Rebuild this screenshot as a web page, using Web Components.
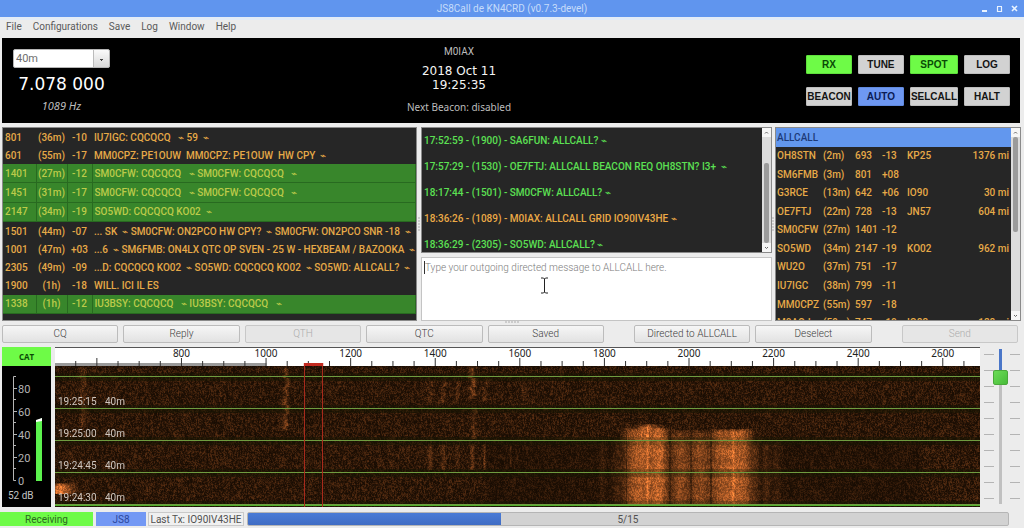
<!DOCTYPE html>
<html lang="en">
<head>
<meta charset="utf-8">
<title>JS8Call de KN4CRD (v0.7.3-devel)</title>
<style>
  html, body { margin: 0; }
  body { background: #ececec; font-family: Roboto, "Liberation Sans", sans-serif; font-size: 10px; color: #5c5c5c; }
</style>
</head>
<body>
<js8-app></js8-app>

<script>
const define = (name, html, setup) => {
  const template = document.createElement('template');
  template.innerHTML = `<style>*{box-sizing:border-box}</style>${html}`;
  customElements.define(name, class extends HTMLElement {
    constructor() {
      super();
      this.attachShadow({ mode: 'open' }).append(template.content.cloneNode(true));
    }
    connectedCallback() { if (setup) setup(this, this.shadowRoot); }
  });
};

define('title-bar', `
<style>
  :host { display: grid; grid-template-columns: 1fr auto 1fr; align-items: center; height: 17px; background: #6095ee; color: #c6dcfa; font-size: 10px; font-weight: 400; }
  h1 { grid-column: 2; margin: 0; font: inherit; }
  div { display: flex; justify-content: flex-end; gap: 4px; padding-right: 4px; }
  button { width: 11px; height: 11px; padding: 0; border: 0; background: none; display: grid; place-items: center; }
  svg { width: 9px; height: 9px; fill: none; stroke: #e9f3ff; stroke-width: 2; }
</style>
<h1><slot></slot></h1>
<div>
  <button aria-label="Minimize"><svg viewBox="0 0 9 9"><path d="M2 7H7"/></svg></button>
  <button aria-label="Maximize"><svg viewBox="0 0 9 9"><path d="M2 2.5H7M2.5 3V7.5H6.5V3" stroke-width="1.2"/></svg></button>
  <button aria-label="Close"><svg viewBox="0 0 9 9"><path d="M2 2L7 7M7 2L2 7" stroke-width="1.6"/></svg></button>
</div>`);

define('menu-bar', `
<style>
  :host { display: block; height: 21px; border-top: 3px solid #e3ecf7; background: #ececec; }
  nav { display: flex; gap: 11px; padding: 0 6px; line-height: 14px; }
  a { color: #5a5a5a; text-decoration: none; font-size: 10px; font-weight: 400; }
</style>
<nav><a href="#file">File</a><a href="#configurations">Configurations</a><a href="#save">Save</a><a href="#log">Log</a><a href="#window">Window</a><a href="#help">Help</a></nav>`);

define('toggle-button', `
<style>
  :host { display: block; }
  button { width: 100%; height: 19px; padding: 0; border: 1px solid #bdbdbd; border-radius: 1px; background: #d2d2d2; color: #141414; font: bold 10px "Liberation Sans", Arial, sans-serif; white-space: nowrap; display: flex; align-items: center; justify-content: center; }
  :host([tone=green]) button { background: #6efb47; border-color: #5fe03c; color: #0a4a06; }
  :host([tone=blue]) button { background: #6e98f2; border-color: #6089de; color: #0b1c55; }
</style>
<button><slot></slot></button>`);

define('radio-header', `
<style>
  :host { display: grid; grid-template-columns: 97px 1fr 204px; height: 85px; margin: 0 4px 0 2px; padding: 11px 10px 0 11px; background: #000; color: #bdbdbd; text-align: center; }
  .dial { display: flex; flex-direction: column; }
  select { appearance: none; width: 97px; height: 19px; padding: 0 2px; border: 1px solid #b5b5b5; border-radius: 2px; color: #6e6e6e; font: 11px Roboto, sans-serif;
    background: linear-gradient(#444, #444) 86px 9px / 3px 1px no-repeat, linear-gradient(#444, #444) 87px 10px / 1px 1px no-repeat, linear-gradient(#bbb, #bbb) 79px 0 / 1px 17px no-repeat, linear-gradient(#fafafa, #d9d9d9) 80px 0 / 16px 17px no-repeat, #fff; }
  .freq { font: 17px/20px "DejaVu Sans", sans-serif; color: #fff; margin: 6px 0 3px; white-space: nowrap; }
  .offset { font: italic 11px/18px "Noto Sans", sans-serif; }
  .call { font-size: 10px; line-height: 14px; margin-top: -5px; }
  .station { padding: 1px 0 0 2px; }
  .clock { font: 12px/14px "DejaVu Sans", sans-serif; color: #f4f4f4; margin: 5px 0 6px; }
  .beacon { font: 10px/18px "Noto Sans", sans-serif; }
  .switches { display: grid; grid-template-columns: repeat(4, 1fr); gap: 13px 6px; padding-top: 6px; align-content: start; }
</style>
<div class="dial">
  <select aria-label="Band"><option>40m</option></select>
  <div class="freq">7.078 000</div>
  <div class="offset">1089 Hz</div>
</div>
<div class="station">
  <div class="call">M0IAX</div>
  <div class="clock">2018 Oct 11<br>19:25:35</div>
  <div class="beacon">Next Beacon: disabled</div>
</div>
<div class="switches">
  <toggle-button tone="green">RX</toggle-button><toggle-button>TUNE</toggle-button><toggle-button tone="green">SPOT</toggle-button><toggle-button>LOG</toggle-button>
  <toggle-button>BEACON</toggle-button><toggle-button tone="blue">AUTO</toggle-button><toggle-button>SELCALL</toggle-button><toggle-button>HALT</toggle-button>
</div>`);

define('scroll-strip', `
<style>
  :host { display: grid; grid-template-rows: 9px var(--before, 1fr) var(--thumb, 1fr) 1fr 9px; width: 9px; background: #dcdcdc; }
  svg { width: 9px; height: 9px; background: #f6f6f6; fill: none; stroke: #666; }
  .thumb { grid-row: 3; margin: 0 2px; border-radius: 2px; background: #9b9b9b; }
  .down { grid-row: 5; }
</style>
<svg viewBox="0 0 9 9"><path d="M3 5.5L4.5 4L6 5.5"/></svg>
<div class="thumb"></div>
<svg class="down" viewBox="0 0 9 9"><path d="M3 4L4.5 5.5L6 4"/></svg>`);

define('band-activity', `
<style>
  :host { display: block; border: 1px solid #8a8a8a; background: #262626; overflow: hidden; }
  table { width: 100%; height: 186px; table-layout: fixed; border-collapse: collapse; color: #e6aa48; font-size: 10px; font-weight: 500; }
  col.a { width: 33px } col.b { width: 31px } col.c { width: 25px }
  td { padding: 1px 0 0 2px; line-height: 14px; white-space: pre; overflow: hidden; }
  td:nth-child(2), td:nth-child(3) { text-align: center; padding: 1px 0 0; }
  tr.cq td { background: #38862b; color: #bccb4a; border-right: 1px solid #286a20; border-bottom: 1px solid #286a20; }
</style>
<table><colgroup><col class="a"><col class="b"><col class="c"><col></colgroup><tbody></tbody></table>`,
(host, root) => {
  const rows = [
    ['801', '(36m)', '-10', 'IU7IGC: CQCQCQ   ⌁ 59  ⌁'],
    ['601', '(55m)', '-17', 'MM0CPZ: PE1OUW  MM0CPZ: PE1OUW  HW CPY  ⌁'],
    ['1401', '(27m)', '-12', 'SM0CFW: CQCQCQ   ⌁ SM0CFW: CQCQCQ   ⌁', 1],
    ['1451', '(31m)', '-17', 'SM0CFW: CQCQCQ   ⌁ SM0CFW: CQCQCQ   ⌁', 1],
    ['2147', '(34m)', '-19', 'SO5WD: CQCQCQ KO02  ⌁', 1],
    ['1501', '(44m)', '-07', '... SK  ⌁ SM0CFW: ON2PCO HW CPY?  ⌁ SM0CFW: ON2PCO SNR -18  ⌁'],
    ['1001', '(47m)', '+03', '...6  ⌁ SM6FMB: ON4LX QTC OP SVEN - 25 W - HEXBEAM / BAZOOKA  ⌁'],
    ['2305', '(49m)', '-09', '...D: CQCQCQ KO02  ⌁ SO5WD: CQCQCQ KO02  ⌁ SO5WD: ALLCALL?  ⌁'],
    ['1900', '(1h)', '-18', 'WILL. ICI IL ES'],
    ['1338', '(1h)', '-12', 'IU3BSY: CQCQCQ   ⌁ IU3BSY: CQCQCQ   ⌁', 1]
  ];
  root.querySelector('tbody').innerHTML = rows.map(([f, a, s, m, cq]) =>
    `<tr${cq ? ' class="cq"' : ''}><td>${f}</td><td>${a}</td><td>${s}</td><td>${m}</td></tr>`).join('');
});

define('message-log', `
<style>
  :host { display: flex; height: 126px; border: 1px solid #8a8a8a; background: #262626; overflow: hidden; --before: 26px; --thumb: 80px; }
  ol { flex: 1; margin: 0; padding: 0 2px; list-style: none; color: #5ce053; font-size: 10px; font-weight: 500; line-height: 26px; white-space: pre; }
  .own { color: #ecaa46; }
</style>
<ol><li>17:52:59 - (1900) - SA6FUN: ALLCALL? ⌁</li><li>17:57:29 - (1530) - OE7FTJ: ALLCALL BEACON REQ OH8STN? I3+  ⌁</li><li>18:17:44 - (1501) - SM0CFW: ALLCALL? ⌁</li><li class="own">18:36:26 - (1089) - M0IAX: ALLCALL GRID IO90IV43HE ⌁</li><li>18:36:29 - (2305) - SO5WD: ALLCALL? ⌁</li></ol>
<scroll-strip></scroll-strip>`);

define('message-editor', `
<style>
  :host { display: flex; position: relative; flex: 1; }
  textarea { flex: 1; min-width: 0; padding: 3px 3px; resize: none; border: 1px solid #c4c4c4; border-radius: 0; outline: 0; background: #fff; color: #444; font: 300 10px/14px Roboto, sans-serif; }
  textarea::placeholder { color: #7d7d7d; opacity: 1; }
  .caret { position: absolute; left: 3px; top: 4px; width: 1px; height: 13px; background: #333; }
  svg { position: absolute; left: 34%; top: 20px; width: 9px; height: 17px; fill: none; stroke: #222; }
</style>
<textarea aria-label="Outgoing message" placeholder="Type your outgoing directed message to ALLCALL here."></textarea>
<span class="caret"></span>
<svg viewBox="0 0 9 17"><path d="M1 1H3.5L4.5 2L5.500 1H8M4.500 2V15M1 16H3.500L4.500 15L5.500 16H8"/></svg>`);

define('call-activity', `
<style>
  :host { display: flex; border: 1px solid #8a8a8a; background: #262626; overflow: hidden; --before: 0px; --thumb: 95px; }
  .view { flex: 1; min-width: 0; height: 192px; overflow: hidden; }
  table { width: 100%; height: 204px; table-layout: fixed; border-collapse: collapse; color: #e6aa48; font-size: 10px; font-weight: 500; }
  col.a { width: 46px } col.b { width: 32px } col.c { width: 27px } col.d { width: 25px } col.e { width: 40px }
  td { padding: 1px 0 0 1px; line-height: 14px; white-space: nowrap; }
  td:nth-child(6) { text-align: right; padding-right: 2px; }
  tr.selected td { background: #6297ee; color: #1d3a78; }
</style>
<div class="view"><table><colgroup><col class="a"><col class="b"><col class="c"><col class="d"><col class="e"><col></colgroup><tbody></tbody></table></div>
<scroll-strip></scroll-strip>`,
(host, root) => {
  const rows = [
    ['OH8STN', '(2m)', '693', '-13', 'KP25', '1376 mi'],
    ['SM6FMB', '(3m)', '801', '+08', '', ''],
    ['G3RCE', '(13m)', '642', '+06', 'IO90', '30 mi'],
    ['OE7FTJ', '(22m)', '728', '-13', 'JN57', '604 mi'],
    ['SM0CFW', '(27m)', '1401', '-12', '', ''],
    ['SO5WD', '(34m)', '2147', '-19', 'KO02', '962 mi'],
    ['WU2O', '(37m)', '751', '-17', '', ''],
    ['IU7IGC', '(38m)', '799', '-11', '', ''],
    ['MM0CPZ', '(55m)', '597', '-18', '', ''],
    ['M0AQJ', '(59m)', '747', '-10', 'IO83', '128 mi']
  ];
  root.querySelector('tbody').innerHTML = '<tr class="selected"><td colspan="6">ALLCALL</td></tr>' +
    rows.map(r => `<tr>${r.map(c => `<td>${c}</td>`).join('')}</tr>`).join('');
});

define('split-grip', `
<style>
  :host { display: grid; place-items: center; }
  i { width: 3px; height: 15px; background: radial-gradient(circle at 1px 1px, #ccc 1px, transparent 1px) 0 0 / 3px 3px; }
  :host([flat]) i { width: 15px; height: 3px; }
</style><i></i>`);

define('action-button', `
<style>
  :host { display: block; flex: 1; }
  button { width: 100%; height: 18px; padding: 0; border: 1px solid #bcbcbc; border-radius: 2px; background: linear-gradient(#f6f6f6, #e2e2e2); color: #3c3c3c; font: 300 10px/16px Roboto, sans-serif; }
  button:disabled { color: #acacac; border-color: #c8c8c8; background: #e6e6e6; }
</style>
<button><slot></slot></button>`,
(host, root) => { root.querySelector('button').disabled = host.hasAttribute('off'); });

define('action-bar', `
<style>
  :host { display: flex; gap: 5px; padding: 0 6px 0 2px; }
  .far { margin-left: 25px; }
</style>
<action-button>CQ</action-button><action-button>Reply</action-button><action-button off>QTH</action-button><action-button>QTC</action-button><action-button>Saved</action-button><action-button class="far">Directed to ALLCALL</action-button><action-button>Deselect</action-button><action-button off class="far">Send</action-button>`);

define('level-meter', `
<style>
  :host { display: flex; flex-direction: column; width: 49px; background: #000; }
  button { height: 19px; padding: 0; border: 0; background: #6efb47; color: #0b4a06; font: bold 8px "Open Sans", sans-serif; }
  svg { display: block; width: 49px; height: 122px; font: 11px Roboto, sans-serif; fill: #b4b4b4; }
  output { padding-left: 6px; font-size: 10px; line-height: 16px; color: #c4c4c4; }
</style>
<button>CAT</button>
<svg viewBox="0 0 49 122">
  <path d="M14 10.500H11.500V114.500H14M11.500 22.500H15M11.500 33.500H14M11.500 45.500H15M11.500 56.500H14M11.500 68.500H15M11.500 79.500H14M11.500 91.500H15M11.500 102.500H14" fill="none" stroke="#b5b5b5"/>
  <text x="16" y="27">80</text><text x="16" y="50">60</text><text x="16" y="73">40</text><text x="16" y="96">20</text><text x="16" y="119">0</text>
  <path d="M34 55L40 52V115H34Z" fill="#5cf24e"/><path d="M34 54L40 52V55L34 56Z" fill="#fff"/>
</svg>
<output>52 dB</output>`);

define('frequency-axis', `
<style>
  :host { display: block; height: 19px; border-top: 1px solid #555; background: #fff; overflow: hidden; }
  svg { display: block; width: 100%; height: 18px; font: 10px "Noto Sans", sans-serif; fill: #222; }
</style><svg></svg>`,
(host, root) => {
  const pos = hz => ((hz - 501) / 2187 * 100).toFixed(3) + '%';
  let out = `<rect x="0" y="15" width="${pos(1001)}" height="3" fill="#9a9a9a"/>`;
  for (let hz = 550; hz < 2688; hz += 50) {
    const x = pos(hz), top = hz % 200 === 0 ? 10 : 13;
    out += `<line x1="${x}" x2="${x}" y1="${top}" y2="18" stroke="#333"/>`;
  }
  for (let hz = 800; hz <= 2600; hz += 200) out += `<text x="${pos(hz)}" y="9" text-anchor="middle">${hz}</text>`;
  out += '<rect x="26.9%" y="15" width="2.1%" height="3" fill="#c22a20"/>';
  root.querySelector('svg').innerHTML = out;
});

define('water-fall', `
<style>
  :host { display: block; position: relative; flex: 1; min-height: 141px; overflow: hidden; }
  canvas { position: absolute; inset: 0; width: 100%; height: 100%; }
  .times { position: relative; margin: 0; padding: 11px 0 0 3px; list-style: none; font-size: 10px; line-height: 14px; color: #cfc6be; }
  li { display: flex; height: 32px; padding-top: 18px; }
  li span { width: 47px; }
  .passband { position: absolute; left: 26.900%; width: 2.1%; top: 0; bottom: 0; border: solid #a82a1c; border-width: 0 1px; }
</style>
<canvas width="925" height="141"></canvas>
<ol class="times"><li><span>19:25:15</span>40m</li><li><span>19:25:00</span>40m</li><li><span>19:24:45</span>40m</li><li><span>19:24:30</span>40m</li></ol>
<div class="passband"></div>`,
(host, root) => {
  const W = 925, H = 141, ctx = root.querySelector('canvas').getContext('2d');
  const img = ctx.createImageData(W, H);
  let seed = 8078;
  const rnd = () => ((seed = (seed * 1664525 + 1013904223) >>> 0) / 4294967296);
  const bump = (x, c, w) => Math.exp(-(((x - c) / w) ** 2));
  const lines = [10, 42, 74, 106, 138];
  // [centre, half width, top, bottom, strength]
  const streaks = [
    [28, 3, 0, 60, .15], [231, 2, 0, 63, .27], [417, 3, 0, 32, .27], [419, 2, 42, 72, .17],
    [375, 2, 14, 36, .14], [388, 2, 14, 36, .16], [402, 2, 14, 36, .12], [430, 2, 14, 34, .15], [468, 2, 14, 34, .1],
    [375, 2, 78, 103, .2], [388, 2, 78, 103, .18], [402, 2, 78, 100, .1], [417, 2, 78, 103, .18], [429, 1, 78, 103, .24], [455, 1, 78, 100, .12],
    [562, 5, 75, 138, .1], [547, 3, 75, 138, .07], [572, 5, 60, 138, .14],
    [580, 9, 62, 138, .4], [593, 11, 58, 138, .52], [605, 7, 62, 138, .5], [592, 1, 58, 138, .3],
    [625, 10, 64, 138, .42], [645, 10, 64, 138, .42],
    [664, 9, 63, 138, .42], [677, 10, 63, 138, .5], [689, 8, 63, 138, .42], [678, 1, 63, 141, .3],
    [700, 4, 76, 138, .14], [711, 4, 76, 138, .14], [721, 4, 76, 138, .1],
    [5, 11, 117, 127, .75]
  ];
  const gaps = [571, 614, 615, 635, 636, 655, 656];
  let above = new Float32Array(W), drift = 0;
  for (let y = 0; y < H; y++) {
    const near = lines.some(l => y >= l - 3 && y <= l + 4);
    if (y % 3 === 0) drift = Math.floor(rnd() * 4) - 2;
    let left = 0;
    for (let x = 0; x < W; x++) {
      const n = rnd() * .6 + above[x] * .28 + left * .12;
      above[x] = left = n;
      let level = .27;
      if (y > 74 && x > 430) level = .19;
      if (x > 865 && y > 78) level = .29;
      let v = n * n * level * (near ? .6 : 1.25), s = 0;
      for (const [c, w, t, b, k] of streaks) if (y >= t && y <= b && Math.abs(x - c) < w * 2.5 + 2) s += k * bump(x, c + (x < 440 && y < 74 ? drift : 0), w) * Math.min(1, (y - t + 2) / 5);
      if (s) {
        let m = .66 + n * .5;
        if (x > 540) {
          m *= .95 + .06 * Math.sin(y / 2.2);
          if (near && y > 68) m *= .8;
          if (y > 63 && gaps.includes(x)) m *= .5;
          if (y < 75 && x > 612 && x < 655) m *= .6;
        }
        v += Math.min(s, .85) * m;
      }
      const i = (y * W + x) * 4;
      img.data[i] = 22 + v * 250;
      img.data[i + 1] = 11 + v * 132 + (near ? 5 : 0);
      img.data[i + 2] = 2 + v * 60;
      img.data[i + 3] = 255;
    }
  }
  ctx.putImageData(img, 0, 0);
  ctx.fillStyle = '#6f9c40';
  for (const y of lines) ctx.fillRect(0, y, W, 1);
  ctx.fillStyle = '#4fae2c';
  ctx.fillRect(0, 139, W, 1);
});

define('gain-slider', `
<style>
  :host { display: grid; width: 44px; padding: 2px 4px 2px 0; place-items: start center; position: relative; }
  .ticks { grid-area: 1 / 1; justify-self: stretch; align-self: stretch; margin: 5px 0 4px 4px;
    background: repeating-linear-gradient(#b4b4b4 0 1px, transparent 1px 16px) 0 0 / 10px 100% no-repeat, repeating-linear-gradient(#b4b4b4 0 1px, transparent 1px 16px) 100% 0 / 10px 100% no-repeat; }
  input { grid-area: 1 / 1; appearance: none; writing-mode: vertical-lr; direction: rtl; width: 16px; height: 155px; margin: 0; background: linear-gradient(#4a76c8 0 24px, #c0c0c0 24px) center / 3px 100% no-repeat; }
  input::-webkit-slider-thumb { appearance: none; width: 15px; height: 15px; border: 1px solid #4aa83a; border-radius: 2px; background: linear-gradient(135deg, #6bdc56, #48bb3a); }
</style>
<div class="ticks"></div>
<input type="range" min="0" max="100" value="85" aria-label="Gain">`);

define('status-bar', `
<style>
  :host { display: flex; align-items: stretch; height: 14px; margin: 5px 15px 2px 0; font-size: 10px; text-align: center; color: #505050; }
  div { border: 1px solid #c9c9c9; line-height: 14px; }
  .rx { width: 93px; background: #6efb47; border-color: #6efb47; color: #2b6a20; }
  .mode { width: 50px; margin-left: 3px; background: #7398f4; border-color: #7398f4; color: #2b479c; }
  .last { width: 96px; margin: 0 3px 0 2px; background: #f0f0f0; white-space: nowrap; }
  .progress { flex: 1; border-radius: 2px; background: linear-gradient(#4a7bd6, #3f6cc4) 0 0 / 33.300% 100% no-repeat, #d2d2d2; border-color: #b5b5b5; }
</style>
<div class="rx">Receiving</div><div class="mode">JS8</div><div class="last">Last Tx: IO90IV43HE</div>
<div class="progress" role="progressbar" aria-valuemin="0" aria-valuemax="15" aria-valuenow="5">5/15</div>`);

define('js8-app', `
<style>
  :host { display: flex; flex-direction: column; min-height: 100vh; }
  .panels { display: grid; grid-template-columns: 415fr 4px 351fr 3px 246fr; margin: 4px 3px 0 2px; height: 194px; }
  .conversation { display: flex; flex-direction: column; gap: 4px; min-width: 0; }
  action-bar { margin: 1px 0 4px; }
  .scope { display: flex; flex: 1; padding-left: 2px; }
  .spectrum { flex: 1; display: flex; flex-direction: column; min-width: 0; margin-left: 4px; }
</style>
<title-bar>JS8Call de KN4CRD (v0.7.3-devel)</title-bar>
<menu-bar></menu-bar>
<radio-header></radio-header>
<main class="panels">
  <band-activity></band-activity>
  <split-grip></split-grip>
  <div class="conversation"><message-log></message-log><message-editor></message-editor></div>
  <split-grip></split-grip>
  <call-activity></call-activity>
</main>
<split-grip flat></split-grip>
<action-bar></action-bar>
<section class="scope">
  <level-meter></level-meter>
  <div class="spectrum"><frequency-axis></frequency-axis><water-fall></water-fall></div>
  <gain-slider></gain-slider>
</section>
<status-bar></status-bar>`);
</script>
</body>
</html>
